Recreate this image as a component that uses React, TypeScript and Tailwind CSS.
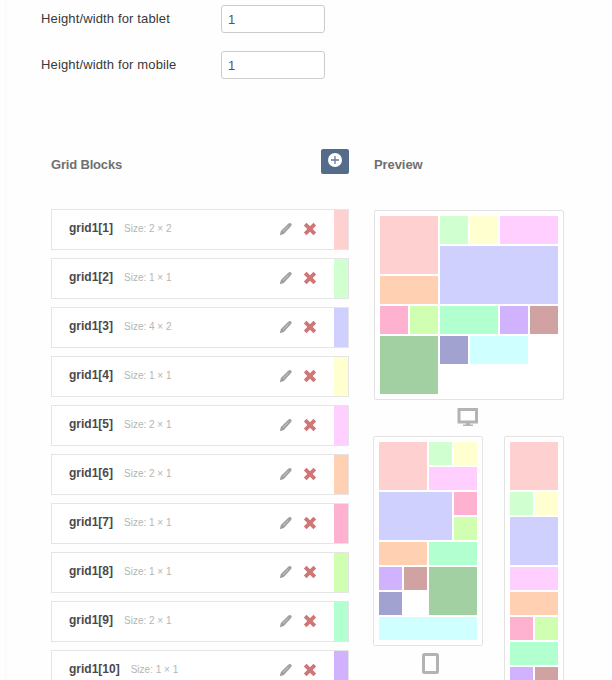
type Block = { w: number; h: number; bg: string };

const blocks: Block[] = [
  { w: 2, h: 2, bg: "bg-[#ffd0d0]" },
  { w: 1, h: 1, bg: "bg-[#d0ffd0]" },
  { w: 4, h: 2, bg: "bg-[#d0d0ff]" },
  { w: 1, h: 1, bg: "bg-[#ffffd0]" },
  { w: 2, h: 1, bg: "bg-[#ffd0ff]" },
  { w: 2, h: 1, bg: "bg-[#ffd0b2]" },
  { w: 1, h: 1, bg: "bg-[#ffb2d0]" },
  { w: 1, h: 1, bg: "bg-[#d0ffb2]" },
  { w: 2, h: 1, bg: "bg-[#b2ffd0]" },
  { w: 1, h: 1, bg: "bg-[#d0b2ff]" },
  { w: 1, h: 1, bg: "bg-[#d0a2a2]" },
  { w: 2, h: 2, bg: "bg-[#a2d0a2]" },
  { w: 1, h: 1, bg: "bg-[#a2a2d0]" },
  { w: 2, h: 1, bg: "bg-[#d0ffff]" },
];

// [block index, column, row, columns, rows]
type Tile = [number, number, number, number, number];

const desktopTiles: Tile[] = [
  [0, 1, 1, 2, 2], [1, 3, 1, 1, 1], [3, 4, 1, 1, 1], [4, 5, 1, 2, 1],
  [2, 3, 2, 4, 2], [5, 1, 3, 2, 1], [6, 1, 4, 1, 1], [7, 2, 4, 1, 1],
  [8, 3, 4, 2, 1], [9, 5, 4, 1, 1], [10, 6, 4, 1, 1], [11, 1, 5, 2, 2],
  [12, 3, 5, 1, 1], [13, 4, 5, 2, 1],
];

const tabletTiles: Tile[] = [
  [0, 1, 1, 2, 2], [1, 3, 1, 1, 1], [3, 4, 1, 1, 1], [4, 3, 2, 2, 1],
  [2, 1, 3, 3, 2], [6, 4, 3, 1, 1], [7, 4, 4, 1, 1], [5, 1, 5, 2, 1],
  [8, 3, 5, 2, 1], [9, 1, 6, 1, 1], [10, 2, 6, 1, 1], [11, 3, 6, 2, 2],
  [12, 1, 7, 1, 1], [13, 1, 8, 4, 1],
];

const mobileTiles: Tile[] = [
  [0, 1, 1, 2, 2], [1, 1, 3, 1, 1], [3, 2, 3, 1, 1], [2, 1, 4, 2, 2],
  [4, 1, 6, 2, 1], [5, 1, 7, 2, 1], [6, 1, 8, 1, 1], [7, 2, 8, 1, 1],
  [8, 1, 9, 2, 1], [9, 1, 10, 1, 1], [10, 2, 10, 1, 1], [11, 1, 11, 2, 2],
];

function PencilIcon() {
  return (
    <svg width="14" height="14" viewBox="0 0 14 14">
      <path d="M.8 13.2l1.100-4.200 7.400-7.300c.9-.9 2-1 2.800-.2.8.8.7 1.900-.2 2.800L4.800 11.900z" fill="#9d9d9d" />
      <path d="M3.900 9.700l5.400-5.400" stroke="#d2d2d2" strokeWidth="1" />
      <path d="M8.800 2.300l2.700 2.700" stroke="#b9b9b9" strokeWidth=".6" />
    </svg>
  );
}

function RemoveIcon() {
  return (
    <svg width="14" height="14" viewBox="0 0 14 14">
      <path d="M2.200 2.200l9.600 9.600M11.800 2.200l-9.600 9.600" stroke="#cf7676" strokeWidth="3.800" />
    </svg>
  );
}

function Field({ label }: { label: string }) {
  return (
    <div className="flex h-7 items-center">
      <label className="w-[180px] text-[13px] tracking-[0.14px] text-[#393939]">{label}</label>
      <input
        defaultValue="1"
        className="h-7 w-[104px] rounded-[3px] border border-[#cccccc] bg-white px-[6px] text-[13px] text-[#555555] outline-none"
      />
    </div>
  );
}

function BlockRow({ index, block }: { index: number; block: Block }) {
  return (
    <li className="flex h-[41px] items-center border border-[#e5e5e5] bg-white pl-[17px]">
      <span className="-mt-[3px] text-[12px] font-bold text-[#4a4a4a]">{`grid1[${index}]`}</span>
      <span className="-mt-[2px] ml-[11px] text-[10px] text-[#b5b5b5]">{`Size: ${block.w} × ${block.h}`}</span>
      <div className="-mt-[2px] ml-auto flex items-center gap-[10px] pr-[17px]">
        <PencilIcon />
        <RemoveIcon />
      </div>
      <div className={`h-full w-[14px] ${block.bg}`} />
    </li>
  );
}

function Preview({ tiles, className }: { tiles: Tile[]; className: string }) {
  return (
    <div className={`grid gap-[2px] rounded-[2px] border border-[#e3e3e3] bg-white p-[5px] ${className}`}>
      {tiles.map(([i, col, row, cols, rows]) => (
        <div
          key={i}
          className={blocks[i].bg}
          style={{ gridColumn: `${col} / span ${cols}`, gridRow: `${row} / span ${rows}` }}
        />
      ))}
    </div>
  );
}

export default function App() {
  return (
    <div className="h-[680px] w-[612px] overflow-hidden bg-[#fefefe] pl-[5px] font-['Liberation_Sans',Arial,sans-serif]">
      <div className="h-full border-l border-[#fafafa] pt-[5px] pl-[35px]">
        <div className="flex flex-col gap-[18px]">
          <Field label="Height/width for tablet" />
          <Field label="Height/width for mobile" />
        </div>

        <div className="mt-[70px] ml-[10px] flex gap-[25px]">
          <section className="w-[298px]">
            <div className="flex h-[60px] items-start justify-between">
              <h2 className="mt-[6px] text-[13px] leading-5 font-bold tracking-[-0.18px] text-[#707070]">Grid Blocks</h2>
              <button className="flex h-[25px] w-7 justify-center rounded-[2px] bg-[#556b8a] pt-1">
                <svg width="14" height="14" viewBox="0 0 14 14">
                  <circle cx="7" cy="7" r="7" fill="#fff" />
                  <path d="M7 3v8M3 7h8" stroke="#647b98" strokeWidth="1.300" />
                </svg>
              </button>
            </div>
            <ul className="flex flex-col gap-2">
              {blocks.slice(0, 10).map((block, i) => (
                <BlockRow key={i} index={i + 1} block={block} />
              ))}
            </ul>
          </section>

          <section className="w-[190px]">
            <h2 className="mt-[6px] mb-[35px] text-[13px] leading-5 font-bold tracking-[-0.08px] text-[#707070]">
              Preview
            </h2>
            <Preview
              tiles={desktopTiles}
              className="w-[190px] grid-cols-[repeat(6,28px)] grid-rows-[repeat(6,28px)]"
            />
            <div className="flex h-9 justify-center pt-2 pr-[3px]">
              <svg width="22" height="20" viewBox="0 0 22 20" className="-mr-px">
                <path d="M2 1.500h17.500v12.500H2z" fill="none" stroke="#b3b3b3" strokeWidth="3" />
                <path d="M9 15h4v2H9zM6 16.500h10V18H6z" fill="#b3b3b3" />
              </svg>
            </div>
            <div className="-ml-px flex items-start justify-between">
              <div>
                <Preview
                  tiles={tabletTiles}
                  className="w-[110px] grid-cols-[repeat(4,23px)] grid-rows-[repeat(8,23px)]"
                />
                <div className="flex justify-center pt-[7px] pl-[5px]">
                  <svg width="17" height="21" viewBox="0 0 17 21">
                    <rect x="1.500" y="1.500" width="14" height="18" rx="1" fill="none" stroke="#b3b3b3" strokeWidth="3" />
                  </svg>
                </div>
              </div>
              <Preview
                tiles={mobileTiles}
                className="w-[60px] grid-cols-[repeat(2,23px)] grid-rows-[repeat(12,23px)]"
              />
            </div>
          </section>
        </div>
      </div>
    </div>
  );
}
